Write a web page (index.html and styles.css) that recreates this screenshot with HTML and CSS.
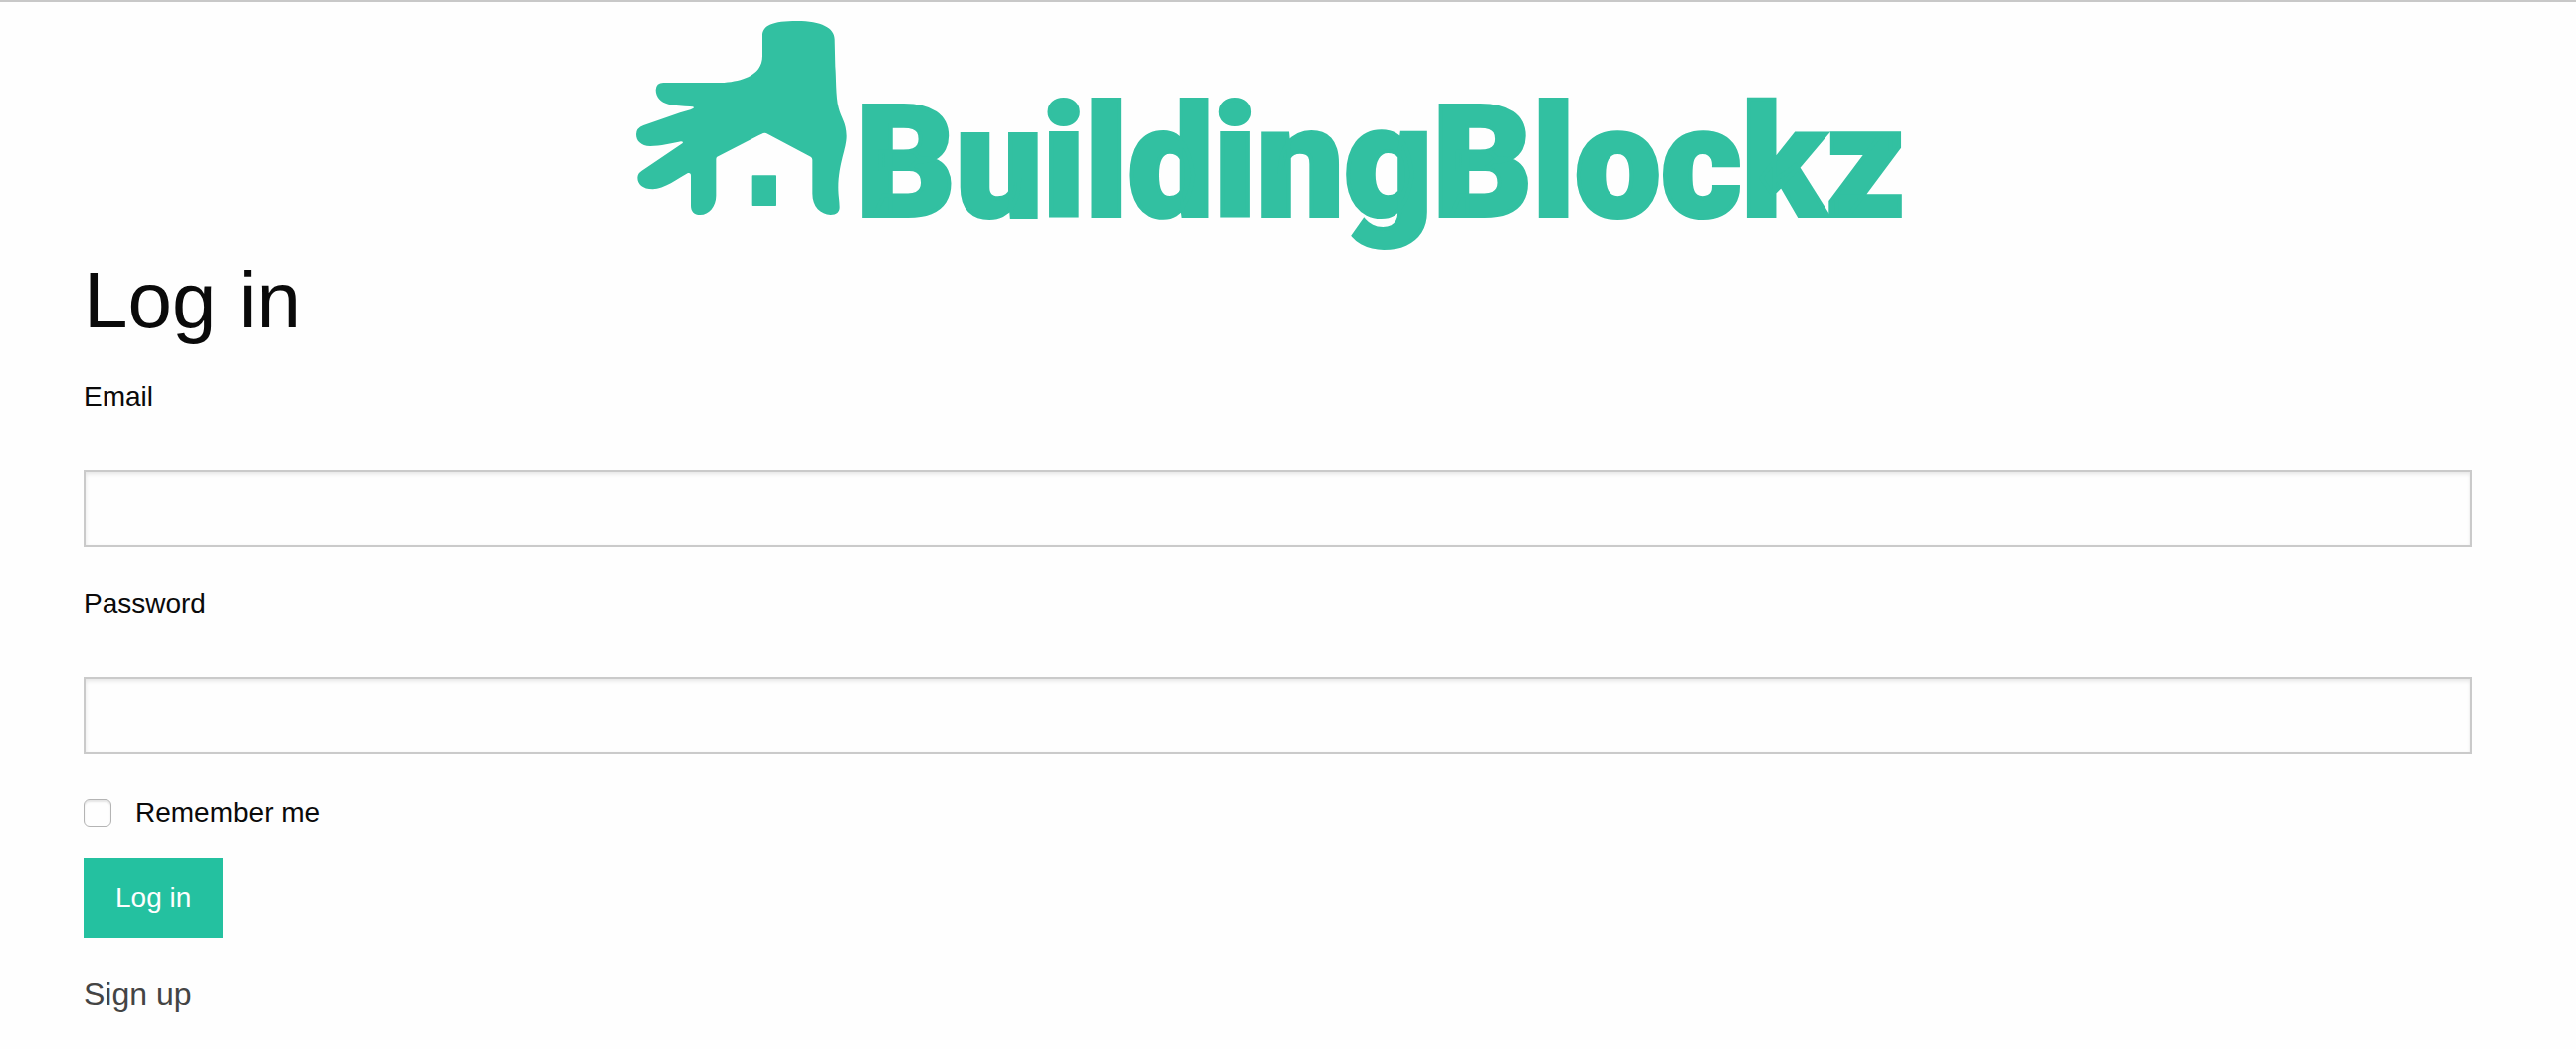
FILE: index.html
```html
<!DOCTYPE html>
<html lang="en">
<head>
<meta charset="utf-8">
<meta name="viewport" content="width=device-width, initial-scale=1">
<title>Log in | BuildingBlockz</title>
<link rel="stylesheet" href="styles.css">
</head>
<body>
<div class="page">
  <header class="brand">
    <svg class="brand-mark" viewBox="60 60 642 591" aria-hidden="true">
      <path d="M444 108C444 76 474 63 549 63C622 63 662 84 662 118L664 200C667 230 665 290 674 325C682 357 697 368 698 410C698 450 674 490 673 566C673 590 677 604 677 625C677 640 668 648 650 648C620 646 595 624 595 584V482Q595 476 590 473L460 404Q451 398 442 404L307 473Q304 475 304 480V590C304 622 283 648 256 648C238 648 228 638 228 620V530Q228 520 219 522C190 538 146 571 113 571C82 570 67 556 67 536Q67 523 80 515L203 432Q206 427 198 427C170 432 136 441 105 441C77 440 63 425 63 405Q63 386 85 378L195 340Q237 329 237 325Q237 321 225 321C205 319 180 319 160 314C137 309 122 292 122 271Q123 249 145 249H318C390 246 444 222 444 169Z"/>
      <rect x="413" y="529" width="73" height="92" rx="2"/>
    </svg>
    <span class="brand-name">BuildingBlockz</span>
  </header>
  <main>
    <h1 class="title">Log in</h1>
    <form>
      <div class="field">
        <label class="label" for="email">Email</label>
        <input class="input" id="email" type="email" name="email">
      </div>
      <div class="field">
        <label class="label" for="password">Password</label>
        <input class="input" id="password" type="password" name="password">
      </div>
      <div class="remember">
        <input class="checkbox" id="remember" type="checkbox" name="remember">
        <label class="label" for="remember">Remember me</label>
      </div>
      <button class="button" type="submit">Log in</button>
    </form>
    <a class="signup" href="#signup">Sign up</a>
  </main>
</div>
</body>
</html>
```
FILE: styles.css
```css
* {
  box-sizing: border-box;
}

body {
  margin: 0;
  border-top: 2px solid #c8c8c8;
  background: #fefefe;
  color: #0a0a0a;
  font-family: "Helvetica Neue", "Liberation Sans", Arial, sans-serif;
  font-size: 28px;
  line-height: 50px;
}

.page {
  padding: 18px 104px 32px 84px;
}

.brand {
  display: flex;
  align-items: baseline;
  justify-content: center;
  gap: 8px;
  padding-right: 16px;
  color: #32c0a1;
}

.brand-mark {
  flex: none;
  width: 214px;
  height: 197px;
  fill: currentColor;
}

.brand-name {
  font-family: Roboto, "Liberation Sans", sans-serif;
  font-size: 155px;
  font-weight: 900;
  line-height: 164px;
  -webkit-text-stroke: 4px currentColor;
}

.title {
  margin: 0 0 16px;
  font-size: 80px;
  font-weight: 400;
  line-height: 112px;
}

.field {
  display: flex;
  flex-direction: column;
  gap: 48px;
  margin-bottom: 32px;
}

.input {
  width: 100%;
  height: 78px;
  padding: 16px;
  border: 2px solid #cacaca;
  border-radius: 0;
  background: #fefefe;
  box-shadow: inset 0 2px 4px rgba(10, 10, 10, 0.1);
  color: inherit;
  font: inherit;
}

.remember {
  display: flex;
  align-items: center;
  gap: 24px;
  padding-top: 2px;
  margin-bottom: 20px;
}

.checkbox {
  appearance: none;
  width: 28px;
  height: 28px;
  margin: 0;
  border: 1px solid #b4b4b4;
  border-radius: 6px;
  background: #fefefe;
  box-shadow: inset 0 2px 2px rgba(10, 10, 10, 0.1);
}

.checkbox:checked {
  background: #24c1a0;
}

.button {
  display: block;
  height: 80px;
  margin: 0 0 32px;
  padding: 0 32px;
  border: 0;
  background: #24c1a0;
  color: #fefefe;
  font: inherit;
  cursor: pointer;
}

.signup {
  color: #444;
  font-size: 32px;
  text-decoration: none;
}
```
